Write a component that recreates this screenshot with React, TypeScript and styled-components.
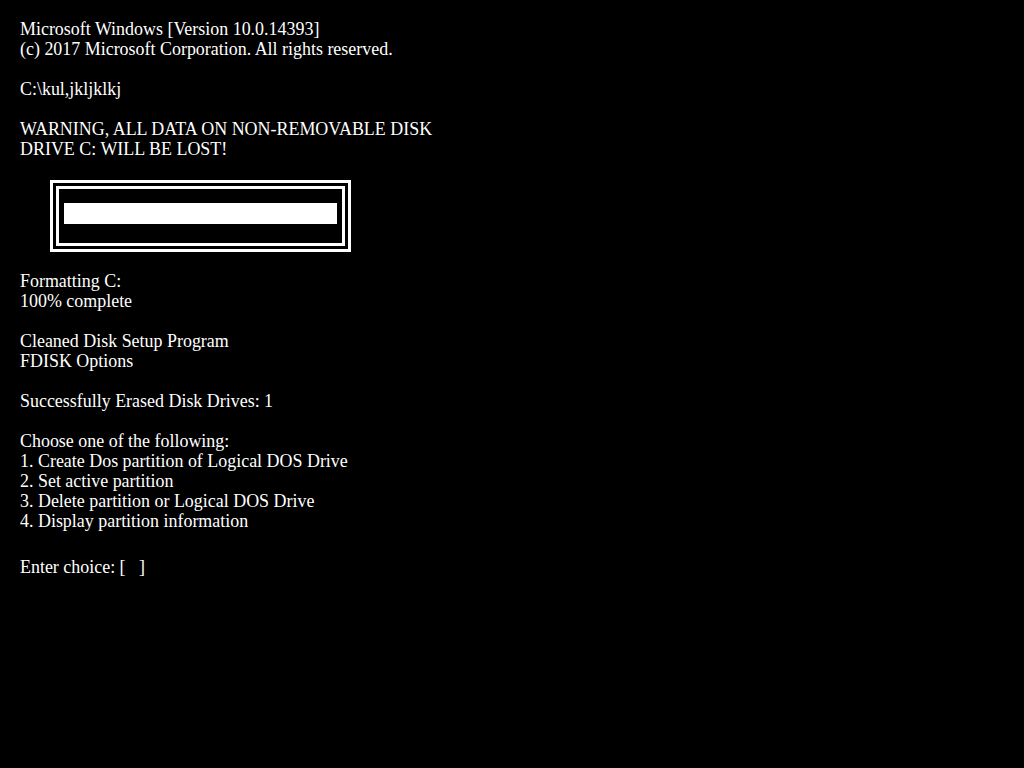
import React from "react";
import styled, { createGlobalStyle } from "styled-components";

const Global = createGlobalStyle`
  html, body { margin: 0; padding: 0; background: #000; }
  body { width: 1024px; height: 768px; overflow: hidden; }
`;

const Screen = styled.div`
  width: 1024px;
  height: 768px;
  background: #000;
  color: #fff;
  font-family: "Liberation Serif", "Times New Roman", serif;
  font-size: 17.95px;
  line-height: 20px;
  padding: 19px 0 0 20px;
  box-sizing: border-box;
  display: flex;
  flex-direction: column;
  align-items: flex-start;
`;

const Block = styled.div<{ $gapTop?: number }>`
  margin-top: ${(p) => p.$gapTop ?? 20}px;
  white-space: pre;
  &:first-child { margin-top: 0; }
`;

const Line = styled.div`
  height: 20px;
`;

const ProgressOuter = styled.div`
  margin: 21px 0 0 30px;
  width: 301px;
  height: 72px;
  box-sizing: border-box;
  border: 3px solid #fff;
  padding: 3px;
`;

const ProgressInner = styled.div`
  height: 100%;
  box-sizing: border-box;
  border: 3px solid #fff;
  padding: 14px 5px 0 5px;
`;

const ProgressBar = styled.div`
  height: 21px;
  background: #fff;
`;

export default function App() {
  return (
    <>
      <Global />
      <Screen>
        <Block>
          <Line>Microsoft Windows [Version 10.0.14393]</Line>
          <Line>(c) 2017 Microsoft Corporation. All rights reserved.</Line>
        </Block>
        <Block>
          <Line>C:\kul,jkljklkj</Line>
        </Block>
        <Block>
          <Line>WARNING, ALL DATA ON NON-REMOVABLE DISK</Line>
          <Line>DRIVE C: WILL BE LOST!</Line>
        </Block>
        <ProgressOuter>
          <ProgressInner>
            <ProgressBar />
          </ProgressInner>
        </ProgressOuter>
        <Block $gapTop={19}>
          <Line>Formatting C:</Line>
          <Line>100% complete</Line>
        </Block>
        <Block>
          <Line>Cleaned Disk Setup Program</Line>
          <Line>FDISK Options</Line>
        </Block>
        <Block>
          <Line>Successfully Erased Disk Drives: 1</Line>
        </Block>
        <Block>
          <Line>Choose one of the following:</Line>
          <Line>1. Create Dos partition of Logical DOS Drive</Line>
          <Line>2. Set active partition</Line>
          <Line>3. Delete partition or Logical DOS Drive</Line>
          <Line>4. Display partition information</Line>
        </Block>
        <Block $gapTop={26}>
          <Line>Enter choice: [   ]</Line>
        </Block>
      </Screen>
    </>
  );
}
